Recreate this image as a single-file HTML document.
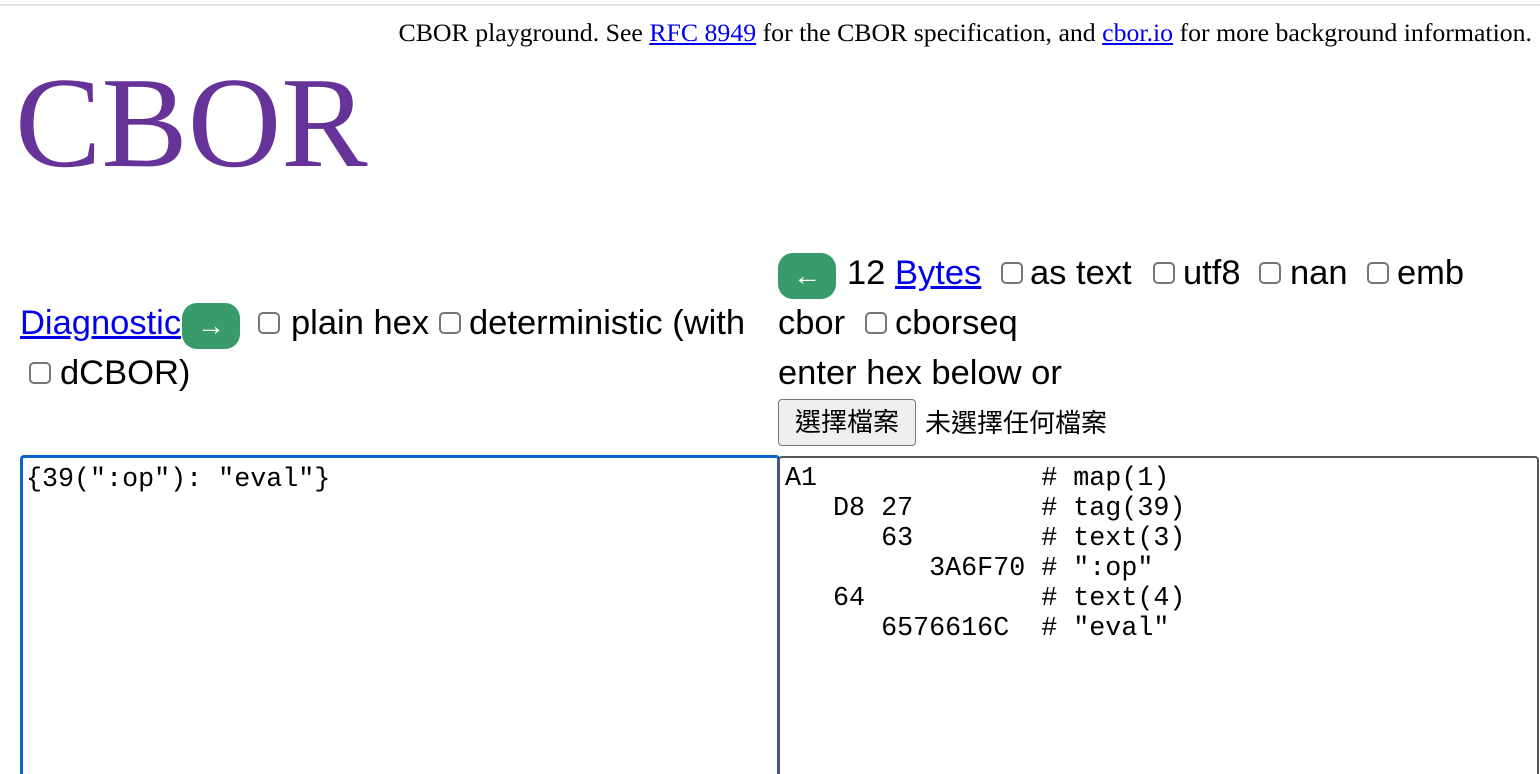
<!DOCTYPE html>
<html><head><meta charset="utf-8"><style>
html,body{margin:0;width:1540px;height:774px;overflow:hidden}
body{background:#fff;position:relative;font-family:"Liberation Sans","Noto Sans CJK TC",sans-serif;color:#000}
.a{position:absolute;white-space:nowrap}
.t{position:absolute;white-space:nowrap;font-size:34.5px;line-height:40px}
a{color:#0000ee;text-decoration:underline}
.cb{position:absolute;width:22px;height:22px;border:2px solid #767676;border-radius:5px;box-sizing:border-box;background:#fff}
.btn{position:absolute;background:#399a6a;border-radius:15px;color:#fff;font-size:28px;text-align:center;line-height:46px}
pre{margin:0;font-family:"Liberation Mono",monospace;font-size:26.7px;line-height:30px}
</style></head><body>
<div class="a" style="left:0;top:4px;width:1540px;height:2px;background:#e3e3e3"></div>
<div class="a" style="right:8px;top:18px;font-family:'Liberation Serif',serif;font-size:25.8px">CBOR playground. See <a>RFC 8949</a> for the CBOR specification, and <a>cbor.io</a> for more background information.</div>
<div class="a" style="left:15px;top:54px;font-family:'Liberation Serif',serif;font-size:129.5px;line-height:140px;color:#663399">CBOR</div>

<div class="t" style="left:20px;top:303px"><a>Diagnostic</a></div>
<div class="btn" style="left:182px;top:303px;width:58px;height:46px">→</div>
<div class="cb" style="left:258px;top:312px"></div>
<div class="t" style="left:291px;top:303px">plain hex</div>
<div class="cb" style="left:439px;top:312px"></div>
<div class="t" style="left:469px;top:303px">deterministic (with</div>
<div class="cb" style="left:29px;top:362px"></div>
<div class="t" style="left:60px;top:353px">dCBOR)</div>

<div class="btn" style="left:778px;top:253px;width:58px;height:46px">←</div>
<div class="t" style="left:847px;top:253px">12 <a>Bytes</a></div>
<div class="cb" style="left:1001px;top:262px"></div>
<div class="t" style="left:1030px;top:253px">as text</div>
<div class="cb" style="left:1153px;top:262px"></div>
<div class="t" style="left:1183px;top:253px">utf8</div>
<div class="cb" style="left:1259px;top:262px"></div>
<div class="t" style="left:1290px;top:253px">nan</div>
<div class="cb" style="left:1367px;top:262px"></div>
<div class="t" style="left:1397px;top:253px">emb</div>
<div class="t" style="left:778px;top:303px">cbor</div>
<div class="cb" style="left:865px;top:312px"></div>
<div class="t" style="left:895px;top:303px">cborseq</div>
<div class="t" style="left:778px;top:353px">enter hex below or</div>
<div class="a" style="left:778px;top:399px;width:138px;height:47px;box-sizing:border-box;background:#efefef;border:1.5px solid #767676;border-radius:4px;font-size:26px;line-height:44px;text-align:center">選擇檔案</div>
<div class="a" style="left:925px;top:404px;font-size:26px;line-height:38px">未選擇任何檔案</div>

<div class="a" style="left:20px;top:455px;width:760px;height:330px;box-sizing:border-box;border:3px solid #0a64d0;border-radius:4px;padding:7px 0 0 3px"><pre>{39(":op"): "eval"}</pre></div>
<div class="a" style="left:778px;top:456px;width:761px;height:330px;box-sizing:border-box;border:2px solid #555;border-radius:4px;padding:6px 0 0 5px"><pre>A1              # map(1)
   D8 27        # tag(39)
      63        # text(3)
         3A6F70 # ":op"
   64           # text(4)
      6576616C  # "eval"</pre></div>
</body></html>
